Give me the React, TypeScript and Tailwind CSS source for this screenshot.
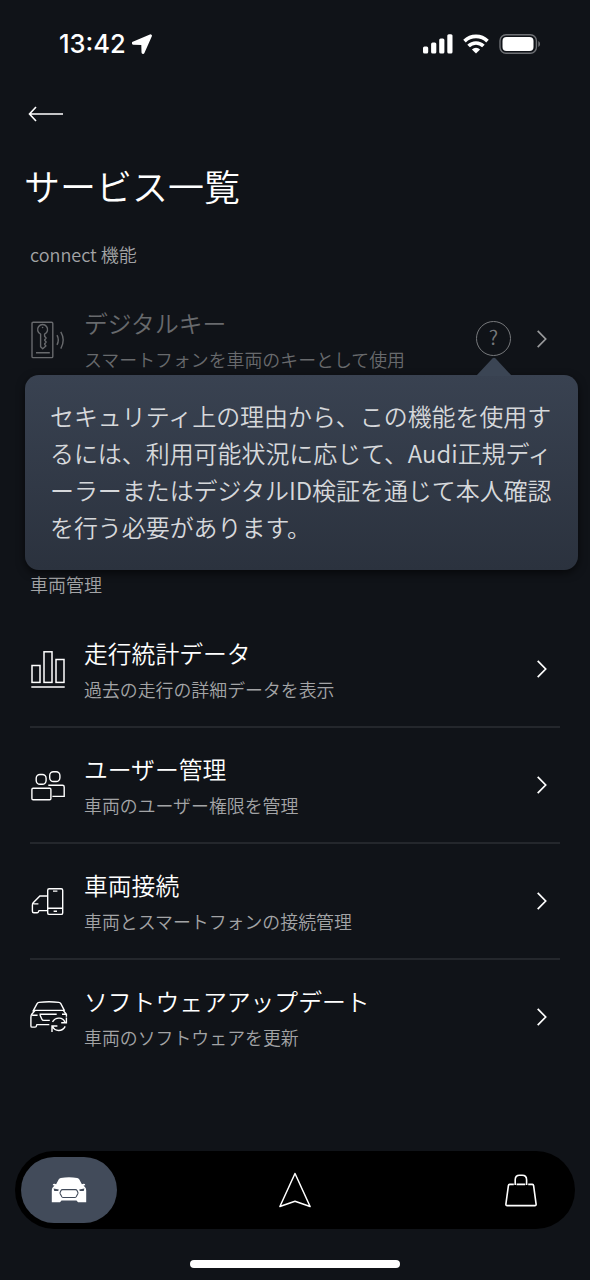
import React from "react";

const KeyCardIcon = () => (
    <svg width="36" height="38" viewBox="0 0 36 38" fill="none" stroke="currentColor" strokeWidth="1.4">
        <rect x="2" y="1.2" width="20.8" height="35.4" rx="1.2" />
        <path d="M10.6 13.1a5 5 0 1 1 4 0v2.2l1.5 1.7-1.5 2 1.5 2-1.5 2 1.3 2-3.2 2.7-2.1-2V13.1Z" strokeLinejoin="round" />
        <circle cx="12.6" cy="6.5" r="0.8" fill="currentColor" stroke="none" />
        <path d="M6 31.7h13.8M27 14.2q2.6 4.8 0 9.6M30.8 10.8q4.8 8.2 0 16.8" />
    </svg>
);

const StatsIcon = () => (
    <svg width="36" height="38" viewBox="0 0 36 38" fill="none" stroke="currentColor" strokeWidth="1.5">
        <rect x="2" y="14.5" width="8" height="16.9" />
        <rect x="14" y="0.8" width="8" height="30.6" />
        <rect x="26" y="8.5" width="8" height="22.9" />
        <path d="M1.3 36h33.4" />
    </svg>
);

const UsersIcon = () => (
    <svg width="36" height="38" viewBox="0 0 36 38" fill="none" stroke="currentColor" strokeWidth="1.4">
        <rect x="6.2" y="7.5" width="9.9" height="9.8" rx="3.8" />
        <rect x="19.7" y="4.7" width="10.2" height="9.8" rx="3.8" />
        <rect x="1.9" y="21.3" width="19" height="11.5" rx="1.2" />
        <path d="M18.3 18.2h14.2q1.7 0 1.7 1.7v9.5H22.4" />
    </svg>
);

const CarPhoneIcon = () => (
    <svg width="36" height="38" viewBox="0 0 36 38" fill="none" stroke="currentColor" strokeWidth="1.4">
        <rect x="17.7" y="5.7" width="15" height="25.7" rx="1.5" />
        <path d="M23 8.1h4.4M17.7 25.3h15M23.6 28.3h3.4M17.7 13H9.9L3.2 19.8q-.8 1-.8 2.4v6.1q0 1.5 1.5 1.5h3.3q1.1 0 1.8-2.2h8.7M3.5 20.9h4.9" />
    </svg>
);

const CarUpdateIcon = () => (
    <svg width="38" height="38" viewBox="0 0 38 38" fill="none" stroke="currentColor" strokeWidth="1.4">
        <path d="M2.8 12.6 7.1 4.7q.5-1 2-1.3 10-1.2 19.7 0 1.4.2 2 1.3l3.8 7.2M1.7 15.2l3.5-3.8h28l3.2 3.8v2.6M1.7 15.2q-.8 1.2-.8 3.6v8.1q0 1.2 1.2 1.2h3q1.3 0 1.4-1.5l.4-1h12.4M2.1 16.2h5.5M9.5 15.3h17.2M32 15.3h4M10 16l1.9 4.2q.5 1.2 1.9 1.2h6" />
        <path d="M22.5 22.8c3.3-5.2 10.5-4.7 12.4.4M36.4 18.4v5.3h-5.2M35.2 27.3c-3 5.6-10.3 5.4-12.6.2M22 33v-6h5.4" />
    </svg>
);

const Chevron = () => (
    <svg width="12" height="20" viewBox="0 0 12 20" fill="none" stroke="currentColor" strokeWidth="1.7">
        <path d="m1.7 1.8 8 8.2-8 8.2" />
    </svg>
);

const StatusBar = () => (
    <div className="flex h-[88px] items-center justify-between pl-[59px] pr-[49px]">
        <div className="flex items-center gap-1.5 font-['Inter'] text-[25.5px] font-[550] leading-none">
            13:42
            <svg width="21" height="20" viewBox="0 0 21 20" fill="currentColor" stroke="currentColor" strokeWidth="1.6" strokeLinejoin="round">
                <path d="M18.2 1.2 1.1 8.5c-.6.4-.5 1.3.4 1.4l8 .2c.4 0 .6.2.6.6l.2 7.7c.1.9 1.1.9 1.4.2L19.1 2c.2-.6-.3-1-.9-.8Z" />
            </svg>
        </div>
        <div className="flex items-center">
            <svg width="30" height="20" viewBox="0 0 30 20" fill="currentColor">
                <rect x="0" y="12.4" width="5.2" height="7" rx="1.5" />
                <rect x="8.1" y="8.6" width="5.2" height="10.8" rx="1.5" />
                <rect x="16.2" y="4.5" width="5.2" height="14.9" rx="1.5" />
                <rect x="24.3" y="0.2" width="5.2" height="19.2" rx="1.5" />
            </svg>
            <svg className="ml-2.5" width="26" height="20" viewBox="0 0 26 20" fill="none" stroke="currentColor" strokeWidth="3.6">
                <path d="M1.5 7.1a16.4 16.4 0 0 1 23 0M5.6 12.1a10.3 10.3 0 0 1 14.8 0" />
                <path d="M8.9 15.4a5.9 5.9 0 0 1 8.2 0L13 19.5Z" fill="currentColor" stroke="none" />
            </svg>
            <svg className="ml-2.5" width="42" height="20" viewBox="0 0 42 20" fill="none">
                <rect x="1" y="0.7" width="36.4" height="18.6" rx="6" stroke="#6e7074" strokeWidth="1.4" />
                <rect x="3.5" y="3" width="31" height="14" rx="4" fill="white" />
                <path d="M39.3 7v6q1.8-1 1.8-3t-1.8-3Z" fill="#6e7074" />
            </svg>
        </div>
    </div>
);

type RowProps = {
    icon: React.ReactNode;
    title: string;
    text: string;
    disabled?: boolean;
    last?: boolean;
    children?: React.ReactNode;
};

const ServiceRow: React.FC<RowProps> = ({ icon, title, text, disabled, last, children }) => (
    <div
        className={`relative mx-[30px] flex h-[116px] items-center border-b-2 ${
            last || disabled ? "border-transparent" : "border-[#24272c]"
        } ${disabled ? "text-[#686a6d]" : "text-white"}`}
    >
        <div className="w-[54px] shrink-0 pt-0.5">{icon}</div>
        <div className="flex-1 whitespace-nowrap pt-1">
            <p className="text-[23.8px] font-[350] leading-9">{title}</p>
            <p className={`text-[17.9px] font-[350] leading-9 ${disabled ? "" : "text-[#a3a4a6]"}`}>
                {text}
            </p>
        </div>
        {children}
        <div className={`mr-3 ${disabled ? "text-[#999a9c]" : ""}`}>
            <Chevron />
        </div>
    </div>
);

const services = [
    { icon: <StatsIcon />, title: "走行統計データ", text: "過去の走行の詳細データを表示" },
    { icon: <UsersIcon />, title: "ユーザー管理", text: "車両のユーザー権限を管理" },
    { icon: <CarPhoneIcon />, title: "車両接続", text: "車両とスマートフォンの接続管理" },
    { icon: <CarUpdateIcon />, title: "ソフトウェアアップデート", text: "車両のソフトウェアを更新" },
];

const tooltipLines = [
    "セキュリティ上の理由から、この機能を使用す",
    "るには、利用可能状況に応じて、Audi正規ディ",
    "ーラーまたはデジタルID検証を通じて本人確認",
    "を行う必要があります。",
];

const Tooltip = () => (
    <div className="absolute -left-[5px] top-[93px] z-10 h-[195px] w-[553px] rounded-[14px] bg-linear-to-b from-[#394251] to-[#2b323e] px-[25px] pt-[22px] shadow-[0_3px_8px_rgba(0,0,0,0.6)]">
        <svg className="absolute -top-[18px] left-[451px]" width="36" height="19" viewBox="0 0 36 19">
            <path d="M0 19 16.4 1.6q1.6-1.6 3.2 0L36 19Z" fill="#3b4554" />
        </svg>
        {tooltipLines.map((line) => (
            <p key={line} className="whitespace-nowrap text-[23.95px] font-[350] leading-[37px] text-[#d6d8db]">
                {line}
            </p>
        ))}
    </div>
);

const TabBar = () => (
    <nav className="mx-[15px] flex h-[78px] items-center justify-between rounded-full bg-black pl-1.5 pr-[37px]">
        <div className="flex h-[66px] w-24 items-center justify-center rounded-full bg-[#424b5a]">
            <svg width="36" height="26" viewBox="0 0 36 26" fill="white">
                <path d="M9.8.9Q18-.2 26.2.9q1.4.2 2 1.4l2.7 5 1.7-.6q1.8 0 1.6 1.5l-1.7.3 1.8 2.1q.9 1.2.9 3v11.7H27l-1.5-1.8h-15L9 25.3H.8V13.6q0-1.8.9-3l1.8-2.1-1.7-.3q-.2-1.5 1.6-1.5l1.7.6 2.7-5Q8.4 1.1 9.8.9Z" />
                <path d="m2.6 11.6 5.2 1-.6 1.3H3.3ZM33.4 11.6l-5.2 1 .6 1.3h3.9Z" fill="#424b5a" />
                <path d="M11.6 12.6h12.8q1.2 0 1.6.9l.9 2q.2.6-.1 1.2l-1.6 3q-.5.8-1.5.8H12.3q-1 0-1.5-.8l-1.6-3q-.3-.6-.1-1.2l.9-2q.4-.9 1.6-.9Z" fill="none" stroke="#424b5a" strokeWidth="1.1" />
            </svg>
        </div>
        <svg className="-ml-[31px]" width="34" height="38" viewBox="0 0 34 38" fill="none" stroke="white" strokeWidth="1.5">
            <path d="M17 2.5 1.9 35.5 17 30.2l15.1 5.3Z" strokeLinejoin="round" />
        </svg>
        <svg width="34" height="36" viewBox="0 0 34 36" fill="none" stroke="white" strokeWidth="1.6">
            <path d="M9.8 12.4H5.7q-1.2 0-1.3 1.2L1.9 32.2q-.1 1.4 1.2 1.4h27.8q1.3 0 1.2-1.4l-2.5-18.6q-.1-1.2-1.3-1.2h-4.1M12.6 12.4h8.6M11.2 13V7.8q0-4.6 4.4-4.6h2.6q4.4 0 4.4 4.6V13" />
        </svg>
    </nav>
);

const App: React.FC = () => {
    return (
        <div className="flex h-[1280px] w-[590px] flex-col overflow-hidden bg-[#101318] font-['Noto_Sans_CJK_JP',sans-serif] text-white">
            <StatusBar />

            <header>
                <svg className="ml-7 mt-[17px] block" width="36" height="18" viewBox="0 0 36 18" fill="none" stroke="white" strokeWidth="1.6">
                    <path d="M35 9H1.5M8 2 1.5 9 8 16" />
                </svg>
                <h1 className="ml-6 mt-[34px] text-[36px] font-[350] leading-[56px]">サービス一覧</h1>
            </header>

            <p className="ml-[30px] mt-[23px] text-lg font-[350] leading-9 text-[#a3a4a6]">connect 機能</p>
            <div className="mt-2.5">
                <ServiceRow
                    icon={<KeyCardIcon />}
                    title="デジタルキー"
                    text="スマートフォンを車両のキーとして使用"
                    disabled
                >
                    <div className="mb-0.5 mr-[25px] flex h-[35px] w-[35px] items-center justify-center rounded-full border-[1.5px] border-[#77797c] text-xl font-[350] text-[#77797c]">
                        <span className="-mt-0.5">?</span>
                    </div>
                    <Tooltip />
                </ServiceRow>
            </div>

            <p className="ml-[30px] mt-[168px] text-lg font-[350] leading-9 text-[#a3a4a6]">車両管理</p>
            <div className="mt-2.5">
                {services.map((service, i) => (
                    <ServiceRow key={service.title} {...service} last={i === services.length - 1} />
                ))}
            </div>

            <div className="mt-auto">
                <TabBar />
                <div className="mx-auto mb-3 mt-[31px] h-2 w-[210px] rounded-full bg-white" />
            </div>
        </div>
    );
};

export default App;
